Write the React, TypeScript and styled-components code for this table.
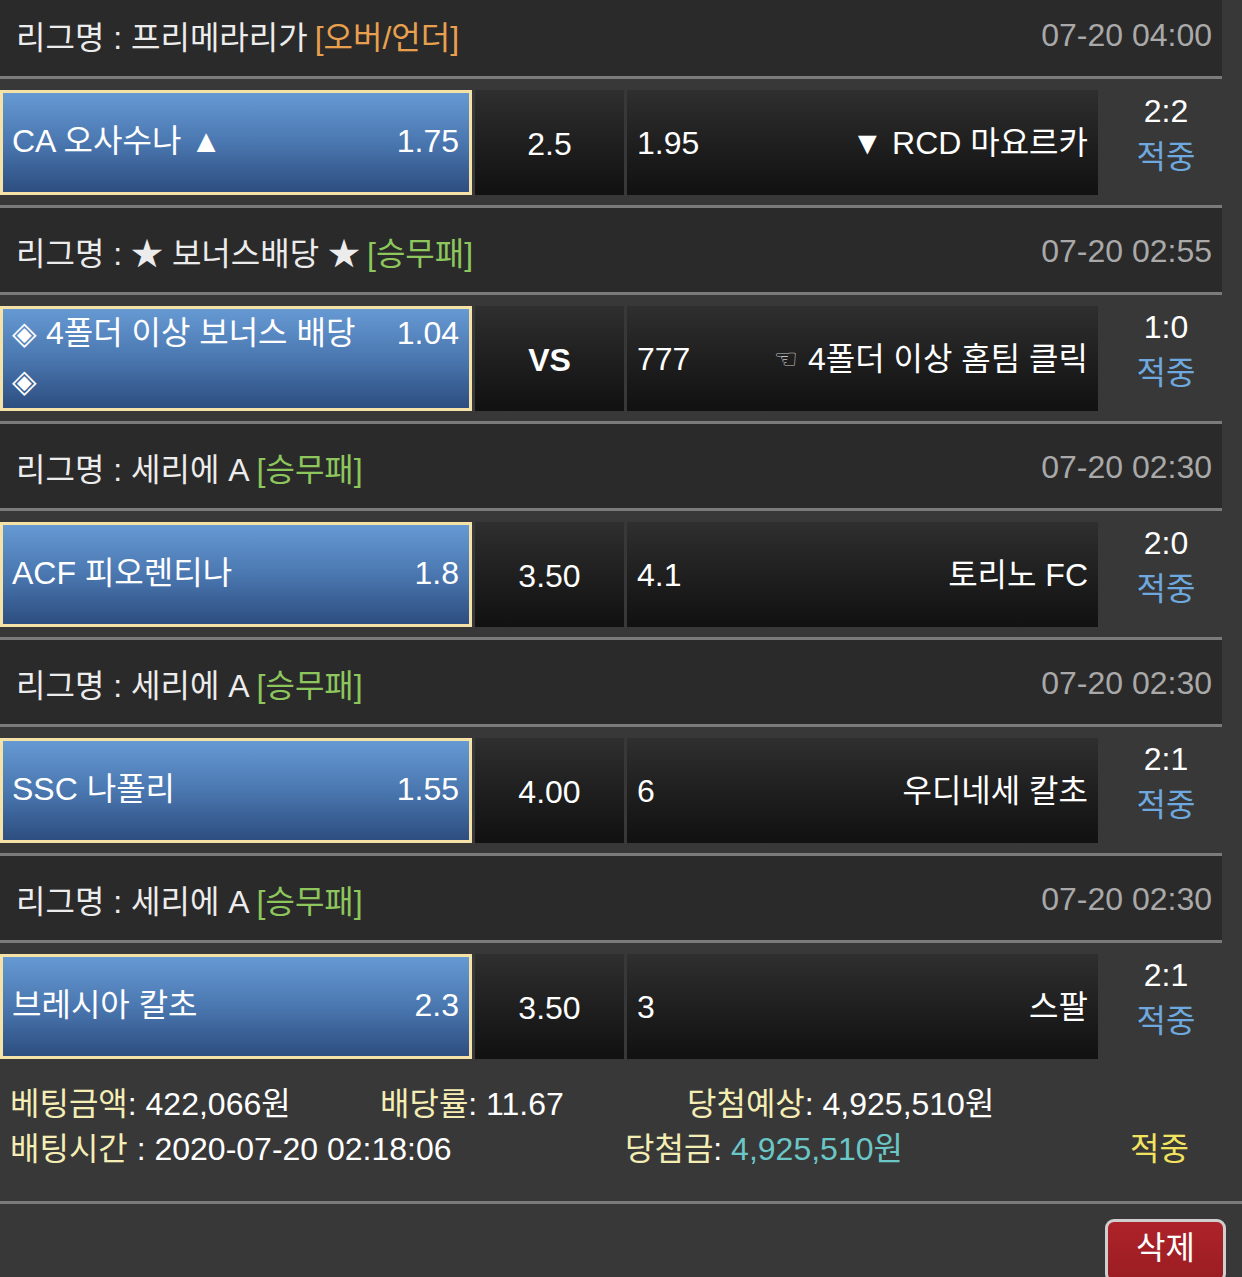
import React from 'react';
import styled, { createGlobalStyle, css } from 'styled-components';

const GlobalStyle = createGlobalStyle`
  *, *::before, *::after { box-sizing: border-box; }
  html, body { margin: 0; padding: 0; background: #383838; }
  body {
    font-family: "Liberation Sans", Arial, "Noto Sans CJK KR", sans-serif;
    font-feature-settings: "palt";
    overflow: hidden;
  }
`;

const Page = styled.div`
  width: 1242px;
  margin-top: -8px;
  background: #383838;
  color: #ffffff;
  font-size: 32px;
`;

const Board = styled.div`
  width: 1222px;
`;

const LeagueHeader = styled.div`
  height: 87px;
  background: #2a2a2a;
  border-bottom: 3px solid #7b7b7b;
  display: flex;
  align-items: center;
  justify-content: space-between;
  padding: 2px 10px 0 16px;
`;

const LeagueName = styled.div`
  color: #ececec;
  white-space: nowrap;
`;

const tagColors: Record<string, string> = {
  ou: '#e9a04e',
  wdl: '#8cc65c',
};

const Tag = styled.span<{ $kind: string }>`
  margin-left: 7px;
  color: ${(p) => tagColors[p.$kind]};
`;

const DateText = styled.div`
  color: #a9a9a9;
`;

const MatchRow = styled.div<{ $last?: boolean }>`
  display: flex;
  padding: 11px 0 10px;
  height: ${(p) => (p.$last ? '126px' : '129px')};
  border-bottom: ${(p) => (p.$last ? 'none' : '3px solid #7b7b7b')};
`;

const HomeCell = styled.div`
  width: 472px;
  height: 105px;
  border: 3px solid #f4e2a6;
  background: linear-gradient(180deg, #6699d3 0%, #4a77b0 50%, #2d4e80 100%);
  display: flex;
  align-items: center;
  padding: 0 10px 0 9px;
`;

const TeamText = styled.div`
  flex: 1;
  line-height: 48px;
  margin-top: -3px;
`;

const HomeOdds = styled.span`
  float: right;
  margin-left: 30px;
`;

const darkCell = css`
  height: 105px;
  margin-left: 3px;
  background: linear-gradient(180deg, #2f2f2f 0%, #1f1f1f 50%, #111111 100%);
  display: flex;
  align-items: center;
`;

const MidCell = styled.div<{ $bold?: boolean }>`
  ${darkCell};
  width: 149px;
  justify-content: center;
  padding-top: 4px;
  font-weight: ${(p) => (p.$bold ? 700 : 400)};
`;

const AwayCell = styled.div`
  ${darkCell};
  width: 471px;
  padding: 0 10px;
`;

const AwayLine = styled.div`
  flex: 1;
  display: flex;
  justify-content: space-between;
  align-items: baseline;
  margin-top: -5px;
`;

const Hand = styled.span`
  font-family: "DejaVu Sans", sans-serif;
  font-size: 27px;
  color: #c4c4c4;
  margin-right: 10px;
  vertical-align: 2px;
`;

const ResultCol = styled.div`
  flex: 1;
  display: flex;
  flex-direction: column;
  align-items: center;
  line-height: 46px;
  margin-top: -2px;
  padding-left: 12px;
`;

const Score = styled.div`
  color: #ffffff;
`;

const Status = styled.div`
  color: #6ea8de;
`;

const Footer = styled.div`
  padding: 13px 0 29px 10px;
  border-bottom: 3px solid #7b7b7b;
`;

const FooterRow = styled.div`
  display: flex;
  line-height: 45px;
  white-space: nowrap;
`;

const FooterCell = styled.div<{ $w?: number }>`
  width: ${(p) => (p.$w ? `${p.$w}px` : 'auto')};
  flex: ${(p) => (p.$w ? 'none' : '1')};
`;

const Label = styled.span`
  color: #f4eeb5;
`;

const Value = styled.span<{ $tone?: 'teal' | 'white' }>`
  color: ${(p) => (p.$tone === 'teal' ? '#6bc7c7' : '#ffffff')};
`;

const Hit = styled.span`
  color: #f2e35e;
`;

const ButtonBar = styled.div`
  display: flex;
  justify-content: flex-end;
  padding: 15px 16px 0 0;
`;

const DeleteButton = styled.button`
  width: 121px;
  height: 64px;
  border: 3px solid #cfcfcf;
  border-radius: 9px;
  background: linear-gradient(180deg, #ad2329 0%, #9a1d22 100%);
  color: #ffffff;
  font-family: "Liberation Sans", Arial, "Noto Sans CJK KR", sans-serif;
  font-feature-settings: "palt";
  font-size: 32px;
  padding: 0 0 6px;
  line-height: 1;
`;

type Match = {
  league: string;
  tag: string;
  tagKind: 'ou' | 'wdl';
  date: string;
  home: string;
  homeOdds: string;
  mid: string;
  midBold?: boolean;
  awayOdds: string;
  away: string;
  hand?: boolean;
  score: string;
};

const matches: Match[] = [
  {
    league: '프리메라리가',
    tag: '[오버/언더]',
    tagKind: 'ou',
    date: '07-20 04:00',
    home: 'CA 오사수나 ▲',
    homeOdds: '1.75',
    mid: '2.5',
    awayOdds: '1.95',
    away: '▼ RCD 마요르카',
    score: '2:2',
  },
  {
    league: '★ 보너스배당 ★',
    tag: '[승무패]',
    tagKind: 'wdl',
    date: '07-20 02:55',
    home: '◈ 4폴더 이상 보너스 배당 ◈',
    homeOdds: '1.04',
    mid: 'VS',
    midBold: true,
    awayOdds: '777',
    away: '4폴더 이상 홈팀 클릭',
    hand: true,
    score: '1:0',
  },
  {
    league: '세리에 A',
    tag: '[승무패]',
    tagKind: 'wdl',
    date: '07-20 02:30',
    home: 'ACF 피오렌티나',
    homeOdds: '1.8',
    mid: '3.50',
    awayOdds: '4.1',
    away: '토리노 FC',
    score: '2:0',
  },
  {
    league: '세리에 A',
    tag: '[승무패]',
    tagKind: 'wdl',
    date: '07-20 02:30',
    home: 'SSC 나폴리',
    homeOdds: '1.55',
    mid: '4.00',
    awayOdds: '6',
    away: '우디네세 칼초',
    score: '2:1',
  },
  {
    league: '세리에 A',
    tag: '[승무패]',
    tagKind: 'wdl',
    date: '07-20 02:30',
    home: '브레시아 칼초',
    homeOdds: '2.3',
    mid: '3.50',
    awayOdds: '3',
    away: '스팔',
    score: '2:1',
  },
];

export default function App() {
  return (
    <Page>
      <GlobalStyle />
      <Board>
        {matches.map((m, i) => (
          <React.Fragment key={i}>
            <LeagueHeader>
              <LeagueName>
                리그명 : {m.league}
                <Tag $kind={m.tagKind}>{m.tag}</Tag>
              </LeagueName>
              <DateText>{m.date}</DateText>
            </LeagueHeader>
            <MatchRow $last={i === matches.length - 1}>
              <HomeCell>
                <TeamText>
                  <HomeOdds>{m.homeOdds}</HomeOdds>
                  {m.home}
                </TeamText>
              </HomeCell>
              <MidCell $bold={m.midBold}>{m.mid}</MidCell>
              <AwayCell>
                <AwayLine>
                  <span>{m.awayOdds}</span>
                  <span>
                    {m.hand && <Hand>☜</Hand>}
                    {m.away}
                  </span>
                </AwayLine>
              </AwayCell>
              <ResultCol>
                <Score>{m.score}</Score>
                <Status>적중</Status>
              </ResultCol>
            </MatchRow>
          </React.Fragment>
        ))}
      </Board>
      <Footer>
        <FooterRow>
          <FooterCell $w={370}>
            <Label>베팅금액</Label>
            <Value>: 422,066원</Value>
          </FooterCell>
          <FooterCell $w={307}>
            <Label>배당률</Label>
            <Value>: 11.67</Value>
          </FooterCell>
          <FooterCell>
            <Label>당첨예상</Label>
            <Value>: 4,925,510원</Value>
          </FooterCell>
        </FooterRow>
        <FooterRow>
          <FooterCell $w={615}>
            <Label>배팅시간</Label>
            <Value> : 2020-07-20 02:18:06</Value>
          </FooterCell>
          <FooterCell $w={505}>
            <Label>당첨금</Label>
            <Value>: </Value>
            <Value $tone="teal">4,925,510원</Value>
          </FooterCell>
          <FooterCell>
            <Hit>적중</Hit>
          </FooterCell>
        </FooterRow>
      </Footer>
      <ButtonBar>
        <DeleteButton>삭제</DeleteButton>
      </ButtonBar>
    </Page>
  );
}
